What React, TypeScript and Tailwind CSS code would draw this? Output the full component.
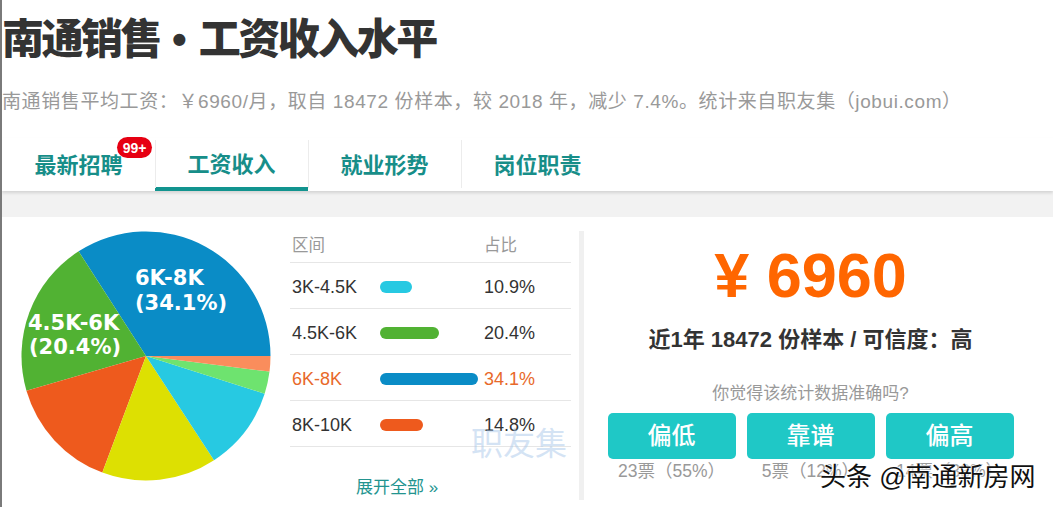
import React from "react"

type Slice = { pct: number; color: string }

// pie order, counter-clockwise from 3 o'clock
const slices: Slice[] = [
  { pct: 34.1, color: "#0a8cc6" },
  { pct: 20.4, color: "#51b233" },
  { pct: 14.8, color: "#ee5a1d" },
  { pct: 14.9, color: "#dde002" },
  { pct: 10.9, color: "#27c9e2" },
  { pct: 2.9, color: "#6ee36f" },
  { pct: 2.0, color: "#fa8d5c" },
]

const rows = [
  { range: "3K-4.5K", pct: "10.9%", bar: 32, color: "#27c9e2", hot: false },
  { range: "4.5K-6K", pct: "20.4%", bar: 59, color: "#51b233", hot: false },
  { range: "6K-8K", pct: "34.1%", bar: 98, color: "#0a8cc6", hot: true },
  { range: "8K-10K", pct: "14.8%", bar: 43, color: "#ee5a1d", hot: false },
]

const tabs = ["最新招聘", "工资收入", "就业形势", "岗位职责"]

const votes = [
  { label: "偏低", count: "23票（55%）" },
  { label: "靠谱", count: "5票（12%）" },
  { label: "偏高", count: "14票（33%）" },
]

function Pie() {
  const cx = 125
  const cy = 125
  const r = 124.5
  let start = 0
  const pt = (deg: number) => {
    const a = (deg * Math.PI) / 180
    return `${cx + r * Math.cos(a)} ${cy - r * Math.sin(a)}`
  }
  return (
    <svg width="250" height="250" viewBox="0 0 250 250" className="shrink-0">
      {slices.map((s, i) => {
        const end = start + (s.pct / 100) * 360
        const large = end - start > 180 ? 1 : 0
        const d = `M ${cx} ${cy} L ${pt(start)} A ${r} ${r} 0 ${large} 0 ${pt(end)} Z`
        start = end
        return <path key={i} d={d} fill={s.color} />
      })}
      <g fill="#fff" fontFamily="DejaVu Sans, sans-serif" fontWeight="bold" fontSize="21">
        <text x="114" y="54">6K-8K</text>
        <text x="114" y="79">(34.1%)</text>
        <text x="7" y="99">4.5K-6K</text>
        <text x="8" y="123">(20.4%)</text>
      </g>
    </svg>
  )
}

export default function App() {
  return (
    <div className="relative h-[507px] w-[1053px] overflow-hidden border-l-2 border-[#7a7a7a] bg-white font-['Liberation_Sans','Noto_Sans_CJK_SC',sans-serif]">
      <header className="pt-[14px]">
        <h1 className="flex items-center text-[42px] font-extrabold leading-[52px] tracking-[-2.5px] text-[#333]">
          <span>南通销售</span>
          <span className="mx-[12px] tracking-normal">•</span>
          <span>工资收入水平</span>
        </h1>
        <p className="mt-[24px] text-[19px] leading-[24px] tracking-[0.6px] text-[#999]">
          南通销售平均工资：￥6960/月，取自 18472 份样本，较 2018 年，减少 7.4%。统计来自职友集（jobui.com）
        </p>
        <nav className="relative z-10 mt-[24px] flex h-[53px] shadow-[0_2px_3px_rgba(0,0,0,0.13)]">
          {tabs.map((t, i) => (
            <div
              key={t}
              className={
                i === 1
                  ? "relative flex w-[153px] items-center justify-center border-b-4 border-[#12948f] pt-[4px] text-[22px] font-bold text-[#178e89]"
                  : "relative flex w-[153px] items-center justify-center pt-[1px] text-[22px] font-bold text-[#178e89]"
              }
            >
              {i > 0 && <span className="absolute left-0 top-[2px] h-[48px] w-px bg-[#ececec]" />}
              {t}
              {i === 0 && (
                <span className="absolute left-[115px] top-[-1px] flex h-[21px] w-[35px] items-center justify-center rounded-full bg-[#e60012] text-[14px] font-bold leading-none text-white">
                  99+
                </span>
              )}
            </div>
          ))}
        </nav>
      </header>
      <div className="h-[26px] bg-[#f2f2f2]" />

      <div className="flex pl-[19px] pt-[14px]">
        <Pie />

        <div className="relative ml-[19px] w-[281px]">
          <div className="flex h-[32px] items-center border-b border-[#e6e6e6] pb-[2px] text-[16.5px] text-[#999]">
            <span className="w-[194px] pl-[2px]">区间</span>
            <span>占比</span>
          </div>
          {rows.map(r => (
            <div
              key={r.range}
              className={
                r.hot
                  ? "flex h-[46px] items-center border-b border-[#e6e6e6] pt-[3px] text-[18px] text-[#e8692a]"
                  : "flex h-[46px] items-center border-b border-[#e6e6e6] pt-[3px] text-[18px] text-[#333]"
              }
            >
              <span className="w-[90px] pl-[2px]">{r.range}</span>
              <span className="w-[104px]">
                <span
                  className="block h-[12px] rounded-full"
                  style={{ width: r.bar, backgroundColor: r.color }}
                />
              </span>
              <span>{r.pct}</span>
            </div>
          ))}
          <div className="ml-[66px] mt-[29px] text-[17px] leading-[24px] text-[#23948f]">展开全部 »</div>
          <span className="absolute left-[181px] top-[197px] text-[32px] leading-none text-[#a9c8ea]/50">职友集</span>
        </div>

        <div className="ml-[8px] w-[5px] self-stretch bg-[#f0f0f0]" />

        <div className="flex flex-1 flex-col items-center pr-[16px]">
          <div className="mt-[13px] text-[63px] font-bold leading-none text-[#ff6600]">¥ 6960</div>
          <div className="mt-[19px] text-[22px] font-bold leading-[28px] text-[#333]">
            近1年 18472 份样本 / 可信度：高
          </div>
          <div className="mt-[28px] text-[17px] leading-[24px] text-[#999]">你觉得该统计数据准确吗?</div>
          <div className="mt-[7px] flex gap-[11px]">
            {votes.map(v => (
              <div key={v.label} className="flex w-[128px] flex-col items-center">
                <div className="flex h-[46px] w-full items-center justify-center rounded-[5px] bg-[#1fc8c6] text-[24px] font-medium text-white">
                  {v.label}
                </div>
                <div className="text-[17.5px] leading-[24px] text-[#999]">{v.count}</div>
              </div>
            ))}
          </div>
        </div>
      </div>

      <div className="absolute left-[818px] top-[461px] text-[26px] leading-[32px] text-[#111] [text-shadow:0_0_2px_#fff,0_0_2px_#fff,0_0_3px_#fff]">
        头条 @南通新房网
      </div>
    </div>
  )
}
